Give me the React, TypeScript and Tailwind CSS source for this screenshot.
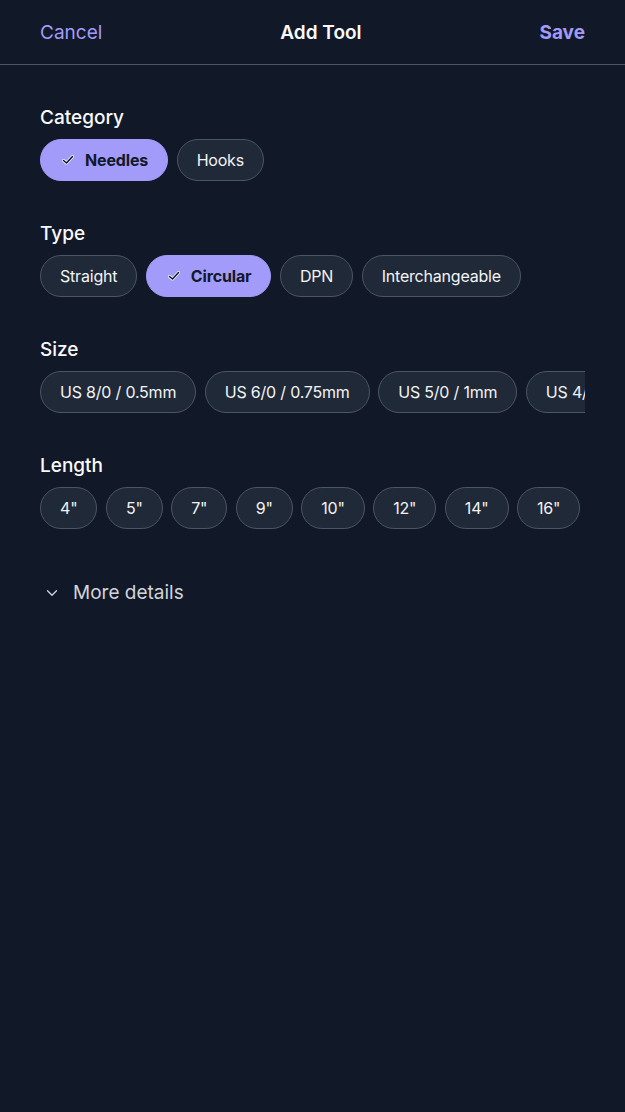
import { ChevronDown } from 'lucide-react';

const categories = ['Needles', 'Hooks'];
const types = ['Straight', 'Circular', 'DPN', 'Interchangeable'];
const sizes = ['US 8/0 / 0.5mm', 'US 6/0 / 0.75mm', 'US 5/0 / 1mm', 'US 4/0 / 1.25mm', 'US 2/0 / 1.5mm'];
const lengths = ['4"', '5"', '7"', '9"', '10"', '12"', '14"', '16"', '20"', '24"'];

function Check() {
  return (
    <svg width="12" height="10" viewBox="0 0 12 10" className="shrink-0">
      <path d="M1.5 5.5 L4.5 8 L10.5 1.5" fill="none" stroke="#ffffff" strokeWidth="3" strokeLinecap="round" strokeLinejoin="round" />
      <path d="M1.5 5.5 L4.5 8 L10.5 1.5" fill="none" stroke="#111827" strokeWidth="1.6" strokeLinecap="round" strokeLinejoin="round" />
    </svg>
  );
}

function Chip({ label, selected }: { label: string; selected?: boolean }) {
  if (selected) {
    return (
      <button className="shrink-0 flex items-center h-[42px] rounded-full border border-[#a29bfa] bg-[#a29bfa] px-[19px] text-[16px] tracking-[-0.15px] font-bold text-[#111827] whitespace-nowrap">
        <span className="w-4 flex justify-center mr-[9px]">
          <Check />
        </span>
        {label}
      </button>
    );
  }
  return (
    <button className="shrink-0 flex items-center h-[42px] rounded-full border border-[#4b5563] bg-[#1f2937] px-[19px] text-[16px] tracking-[-0.2px] text-[#f3f4f6] whitespace-nowrap">
      {label}
    </button>
  );
}

function Section({ title, items, selected }: { title: string; items: string[]; selected?: string }) {
  return (
    <div>
      <h2 className="text-[19px] font-medium text-[#f9fafb] leading-6">{title}</h2>
      <div className="mt-[9px] flex gap-[8.5px] overflow-hidden">
        {items.map((item) => (
          <Chip key={item} label={item} selected={item === selected} />
        ))}
      </div>
    </div>
  );
}

export default function App() {
  return (
    <div
      className="min-h-[1112px] bg-[#111827] text-white"
      style={{ fontFamily: 'Inter, "Noto Sans", sans-serif' }}
    >
      <header className="flex items-center justify-between h-[65px] pt-[2px] px-10 border-b border-[#4b5563]">
        <button className="text-[19px] text-[#a29bfa]">Cancel</button>
        <h1 className="text-[19px] font-semibold text-[#f9fafb]">Add Tool</h1>
        <button className="text-[19px] font-bold text-[#a29bfa]">Save</button>
      </header>

      <main className="px-10 pt-[41px] flex flex-col gap-[41px]">
        <Section title="Category" items={categories} selected="Needles" />
        <Section title="Type" items={types} selected="Circular" />
        <Section title="Size" items={sizes} />
        <Section title="Length" items={lengths} />

        <button className="flex items-center gap-[12px] mt-[9px] pl-[3px] text-[19px] text-[#d1d5db]">
          <ChevronDown className="w-[18px] h-[18px] text-[#d1d5db]" strokeWidth={1.75} />
          More details
        </button>
      </main>
    </div>
  );
}
